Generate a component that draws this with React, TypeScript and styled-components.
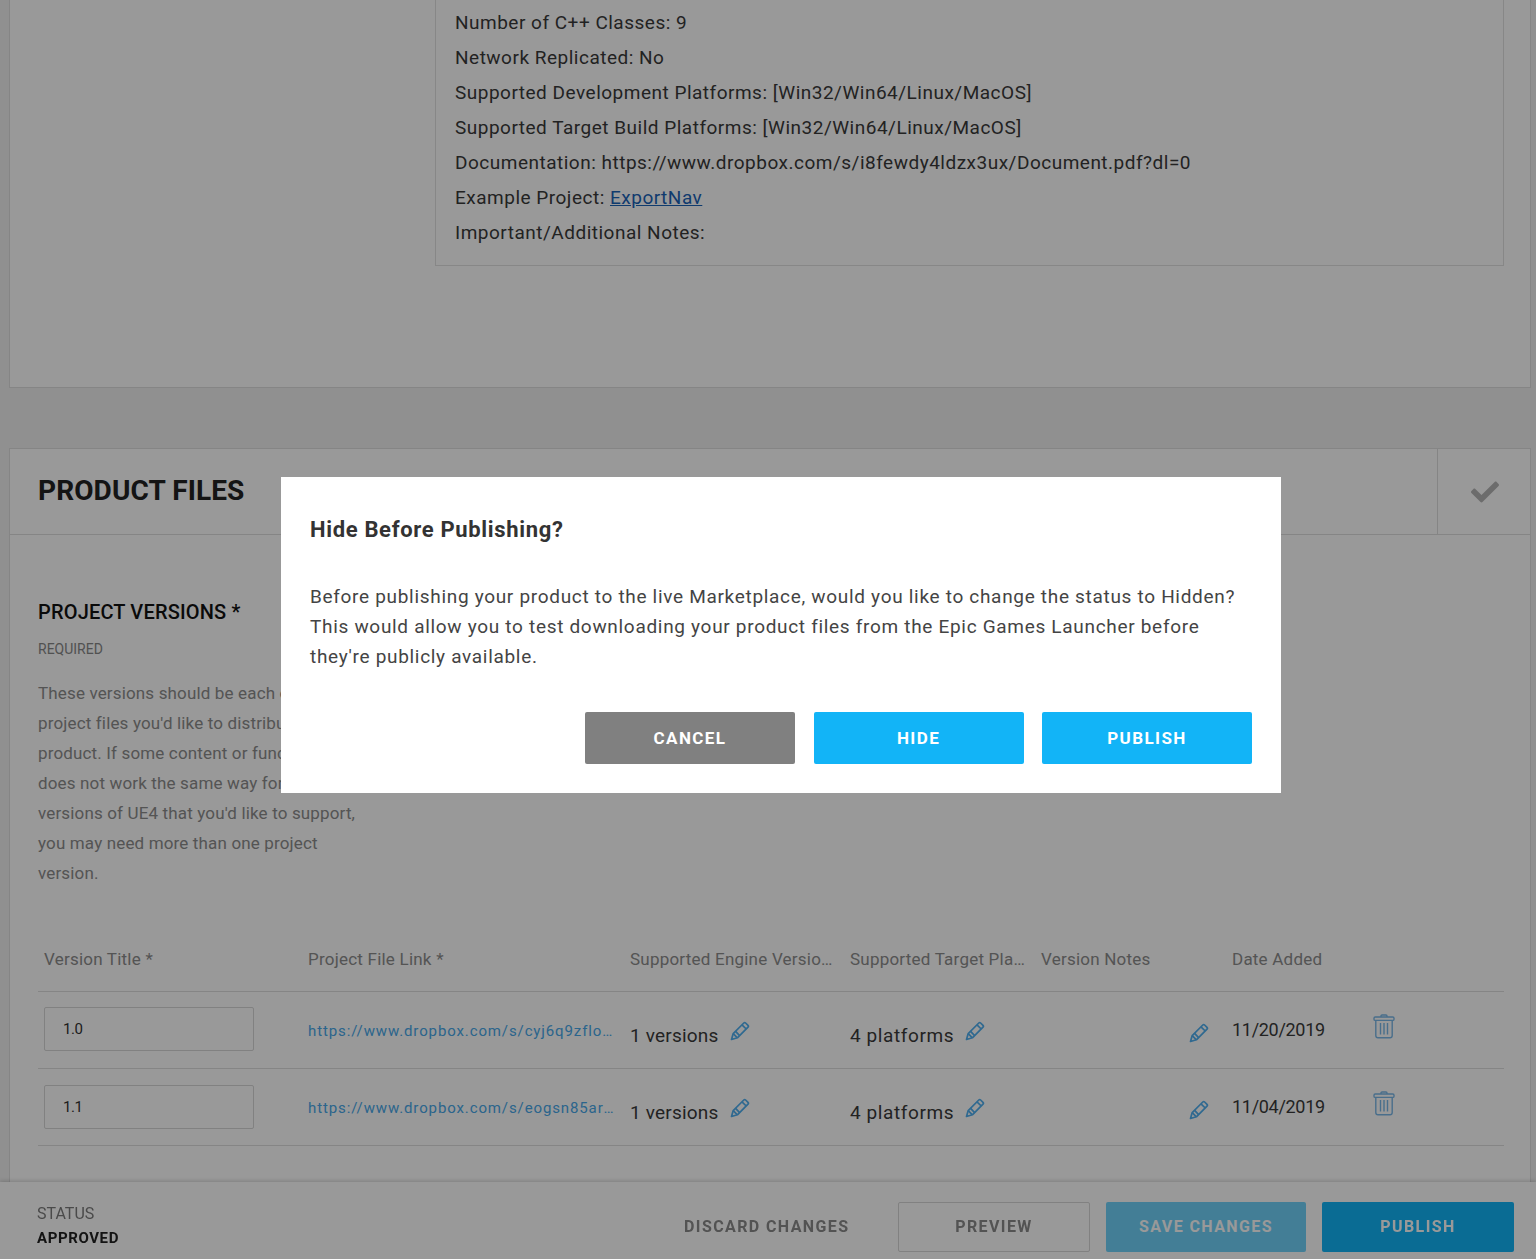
import React from "react";
import styled, { createGlobalStyle } from "styled-components";
import { FaCheck } from "react-icons/fa";

const Global = createGlobalStyle`
  html, body { margin: 0; height: 1259px; overflow: hidden; background: #f0f0f0; }
  body { font-family: Roboto, "Liberation Sans", sans-serif; }
  * { box-sizing: border-box; }
`;

const Page = styled.div`
  height: 1259px;
  overflow: hidden;
  padding: 0 5px 0 9px;
  background: #f0f0f0;
`;

const TopPanel = styled.section`
  height: 388px;
  background: #fff;
  border: 1px solid #dedede;
  border-top: 0;
  padding: 0 26px 0 425px;
`;

const SpecBox = styled.div`
  border: 1px solid #e2e2e2;
  border-top: 0;
  padding: 5px 20px 15px 19px;
`;

const SpecLine = styled.p`
  margin: 0;
  font-size: 19px;
  line-height: 35px;
  letter-spacing: 0.5px;
  color: #3a3a3a;
  white-space: nowrap;
`;

const SpecLink = styled.a`
  color: #1a63b8;
  text-decoration: underline;
`;

const FilesPanel = styled.section`
  margin-top: 60px;
  background: #fff;
  border: 1px solid #dedede;
  height: 900px;
`;

const FilesHeader = styled.header`
  display: flex;
  align-items: stretch;
  justify-content: space-between;
  height: 86px;
  border-bottom: 1px solid #dedede;
`;

const FilesTitle = styled.h2`
  margin: 0 0 2px;
  padding-left: 28px;
  align-self: center;
  font-size: 28px;
  font-weight: 700;
  letter-spacing: 0.1px;
  color: #222;
`;

const CheckCell = styled.div`
  width: 93px;
  border-left: 1px solid #dedede;
  display: flex;
  align-items: center;
  justify-content: center;
  padding-left: 1px;
  color: #b5b5b5;
  font-size: 28px;
`;

const FilesBody = styled.div`
  padding: 63px 26px 0 28px;
`;

const GroupTitle = styled.h3`
  margin: 0;
  font-size: 20px;
  line-height: 28px;
  font-weight: 500;
  letter-spacing: 0.17px;
  color: #111;
`;

const RequiredNote = styled.div`
  margin-top: 14px;
  font-size: 14px;
  line-height: 18px;
  color: #888;
`;

const GroupText = styled.p`
  margin: 20px 0 0;
  font-size: 17px;
  line-height: 30px;
  letter-spacing: 0.15px;
  color: #8c8c8c;
  white-space: nowrap;
`;

const Table = styled.div`
  margin-top: 43px;
  width: 1466px;
`;

const columns = "264px 322px 220px 191px 191px 141px 1fr";

const HeadRow = styled.div`
  display: grid;
  grid-template-columns: ${columns};
  height: 61px;
  padding-bottom: 5px;
  align-items: center;
  border-bottom: 1px solid #dedede;
`;

const HeadCell = styled.div`
  padding: 0 6px;
  font-size: 17px;
  letter-spacing: 0.22px;
  color: #8c8c8c;
  white-space: nowrap;
  overflow: hidden;
  text-overflow: ellipsis;
`;

const VersionInput = styled.input`
  width: 210px;
  height: 44px;
  border: 1px solid #d8d8d8;
  border-radius: 2px;
  background: #fff;
  padding: 0 18px;
  font: 15px Roboto, sans-serif;
  letter-spacing: -0.5px;
  color: #333;
  outline: none;
`;

const Row = styled.div`
  display: grid;
  grid-template-columns: ${columns};
  height: 77px;
  align-items: center;
  border-bottom: 1px solid #dedede;
  &:nth-child(2) ${VersionInput} {
    margin-bottom: 2px;
  }
`;

const Cell = styled.div`
  padding: 0 6px;
  display: flex;
  align-items: center;
  min-width: 0;
`;

const FileLink = styled.a`
  display: block;
  width: 309px;
  margin-top: 2px;
  font-size: 15px;
  letter-spacing: 0.88px;
  color: #48a8ea;
  text-decoration: none;
  white-space: nowrap;
  overflow: hidden;
  text-overflow: ellipsis;
`;

const CountText = styled.span<{ $spacing: number }>`
  font-size: 19px;
  letter-spacing: ${(p) => p.$spacing}px;
  color: #3a3a3a;
  margin-top: 10px;
`;

const PencilButton = styled.span`
  display: inline-flex;
  margin-left: 11px;
  margin-top: 2px;
  color: #50b0f0;
`;

const NotesCell = styled(Cell)`
  justify-content: flex-end;
  padding-right: 17px;
  margin-top: 4px;
`;

const DateText = styled.span`
  font-size: 18px;
  letter-spacing: -0.3px;
  color: #3a3a3a;
  margin-bottom: 2px;
`;

const TrashButton = styled.span`
  display: inline-flex;
  color: #7ab8e8;
  margin: 0 0 8px 0;
`;

const Footer = styled.footer`
  position: fixed;
  left: 0;
  right: 0;
  bottom: 0;
  height: 77px;
  background: #fff;
  box-shadow: 0 -1px 4px rgba(0, 0, 0, 0.18);
  display: flex;
  align-items: center;
  justify-content: space-between;
  padding: 0 22px 0 37px;
`;

const StatusBlock = styled.div`
  padding-top: 10px;
`;

const StatusLabel = styled.div`
  font-size: 16px;
  line-height: 24px;
  color: #7c7c7c;
`;

const StatusValue = styled.div`
  font-size: 15px;
  line-height: 24px;
  font-weight: 700;
  letter-spacing: 0.6px;
  color: #222;
`;

const FooterActions = styled.div`
  display: flex;
  align-items: center;
  padding-top: 12px;
  gap: 16px;
`;

type Kind = "plain" | "outline" | "faded" | "solid" | "gray";

const ActionButton = styled.button<{ $w: number; $kind: Kind }>`
  width: ${(p) => p.$w}px;
  height: 50px;
  padding: 0;
  white-space: nowrap;
  border-radius: 2px;
  font: 700 16px Roboto, sans-serif;
  letter-spacing: 1.4px;
  cursor: pointer;
  border: ${(p) => (p.$kind === "outline" ? "1px solid #d8d8d8" : "0")};
  background: ${(p) =>
    p.$kind === "plain" || p.$kind === "outline"
      ? "transparent"
      : p.$kind === "gray"
        ? "#808080"
        : "#12b4f7"};
  color: ${(p) => (p.$kind === "plain" || p.$kind === "outline" ? "#8a8a8a" : "#fff")};
  opacity: ${(p) => (p.$kind === "faded" ? 0.6 : 1)};
`;

const DiscardButton = styled(ActionButton)`
  margin-right: 33px;
`;

const ModalButton = styled(ActionButton)`
  height: 52px;
  font-size: 17px;
`;

const Overlay = styled.div`
  position: fixed;
  inset: 0;
  background: rgba(0, 0, 0, 0.4);
  display: flex;
  justify-content: center;
  padding: 477px 0 0 26px;
`;

const Modal = styled.div`
  width: 1000px;
  height: 316px;
  background: #fff;
  padding: 30px 29px 29px;
`;

const ModalTitle = styled.h2`
  margin: 0;
  font-size: 22px;
  line-height: 46px;
  font-weight: 700;
  letter-spacing: 0.66px;
  color: #333;
`;

const ModalText = styled.p`
  margin: 29px 0 0;
  font-size: 19px;
  line-height: 30px;
  letter-spacing: 0.69px;
  color: #444;
`;

const ModalActions = styled.div`
  display: flex;
  justify-content: flex-end;
  gap: 18.5px;
  margin-top: 40px;
`;

const Pencil = () => (
  <svg width="20" height="20" viewBox="0 0 20 20" fill="none" stroke="currentColor" strokeWidth="1.7" strokeLinejoin="round">
    <path d="M1.5 18.5 L3.2 12.6 L13.8 2 a1.3 1.3 0 0 1 1.8 0 L18 4.4 a1.3 1.3 0 0 1 0 1.8 L7.4 16.8 Z" />
    <path d="M3.2 12.6 L7.4 16.8 M5.6 10.4 L9.6 14.6 M12 3.8 L16.2 8" />
  </svg>
);

const Trash = () => (
  <svg width="22" height="25" viewBox="0 0 22 25" fill="none" stroke="currentColor" strokeWidth="1.4" strokeLinejoin="round">
    <path d="M8 3 V2 a1 1 0 0 1 1-1 h4 a1 1 0 0 1 1 1 V3" />
    <rect x="1" y="3" width="20" height="3.4" rx="1.2" />
    <path d="M2.8 6.4 V21.5 a2.2 2.2 0 0 0 2.2 2.2 H17 a2.2 2.2 0 0 0 2.2-2.2 V6.4" />
    <path d="M7.5 9 V20.5 M11 9 V20.5 M14.5 9 V20.5" />
  </svg>
);

const specs = [
  "Number of C++ Classes: 9",
  "Network Replicated: No",
  "Supported Development Platforms: [Win32/Win64/Linux/MacOS]",
  "Supported Target Build Platforms: [Win32/Win64/Linux/MacOS]",
  "Documentation: https://www.dropbox.com/s/i8fewdy4ldzx3ux/Document.pdf?dl=0",
];

const heads = [
  "Version Title *",
  "Project File Link *",
  "Supported Engine Versions *",
  "Supported Target Platforms *",
  "Version Notes",
  "Date Added",
  "",
];

const guidance = [
  "These versions should be each of the",
  "project files you'd like to distribute for your",
  "product. If some content or functionality",
  "does not work the same way for different",
  "versions of UE4 that you'd like to support,",
  "you may need more than one project",
  "version.",
];

const rows = [
  { version: "1.0", link: "https://www.dropbox.com/s/cyj6q9zflo7nw3k/ExportNav.zip?dl=0", date: "11/20/2019" },
  { version: "1.1", link: "https://www.dropbox.com/s/eogsn85ar2kd1vt/ExportNav.zip?dl=0", date: "11/04/2019" },
];

export default function App() {
  return (
    <>
      <Global />
      <Page>
        <TopPanel>
          <SpecBox>
            {specs.map((s) => (
              <SpecLine key={s}>{s}</SpecLine>
            ))}
            <SpecLine>
              Example Project: <SpecLink href="#">ExportNav</SpecLink>
            </SpecLine>
            <SpecLine>Important/Additional Notes:</SpecLine>
          </SpecBox>
        </TopPanel>
        <FilesPanel>
          <FilesHeader>
            <FilesTitle>PRODUCT FILES</FilesTitle>
            <CheckCell>
              <FaCheck />
            </CheckCell>
          </FilesHeader>
          <FilesBody>
            <GroupTitle>PROJECT VERSIONS *</GroupTitle>
            <RequiredNote>REQUIRED</RequiredNote>
            <GroupText>
              {guidance.map((line) => (
                <React.Fragment key={line}>
                  {line}
                  <br />
                </React.Fragment>
              ))}
            </GroupText>
            <Table>
              <HeadRow>
                {heads.map((h, i) => (
                  <HeadCell key={i}>{h}</HeadCell>
                ))}
              </HeadRow>
              {rows.map((r) => (
                <Row key={r.version}>
                  <Cell>
                    <VersionInput readOnly value={r.version} />
                  </Cell>
                  <Cell>
                    <FileLink href="#">{r.link}</FileLink>
                  </Cell>
                  <Cell>
                    <CountText $spacing={0.2}>1 versions</CountText>
                    <PencilButton>
                      <Pencil />
                    </PencilButton>
                  </Cell>
                  <Cell>
                    <CountText $spacing={0.6}>4 platforms</CountText>
                    <PencilButton>
                      <Pencil />
                    </PencilButton>
                  </Cell>
                  <NotesCell>
                    <PencilButton>
                      <Pencil />
                    </PencilButton>
                  </NotesCell>
                  <Cell>
                    <DateText>{r.date}</DateText>
                  </Cell>
                  <Cell>
                    <TrashButton>
                      <Trash />
                    </TrashButton>
                  </Cell>
                </Row>
              ))}
            </Table>
          </FilesBody>
        </FilesPanel>
      </Page>
      <Footer>
        <StatusBlock>
          <StatusLabel>STATUS</StatusLabel>
          <StatusValue>APPROVED</StatusValue>
        </StatusBlock>
        <FooterActions>
          <DiscardButton $w={165} $kind="plain">DISCARD CHANGES</DiscardButton>
          <ActionButton $w={192} $kind="outline">PREVIEW</ActionButton>
          <ActionButton $w={200} $kind="faded">SAVE CHANGES</ActionButton>
          <ActionButton $w={192} $kind="solid">PUBLISH</ActionButton>
        </FooterActions>
      </Footer>
      <Overlay>
        <Modal>
          <ModalTitle>Hide Before Publishing?</ModalTitle>
          <ModalText>
            Before publishing your product to the live Marketplace, would you like to change the
            status to Hidden? This would allow you to test downloading your product files from the
            Epic Games Launcher before they're publicly available.
          </ModalText>
          <ModalActions>
            <ModalButton $w={210} $kind="gray">CANCEL</ModalButton>
            <ModalButton $w={210} $kind="solid">HIDE</ModalButton>
            <ModalButton $w={210} $kind="solid">PUBLISH</ModalButton>
          </ModalActions>
        </Modal>
      </Overlay>
    </>
  );
}
